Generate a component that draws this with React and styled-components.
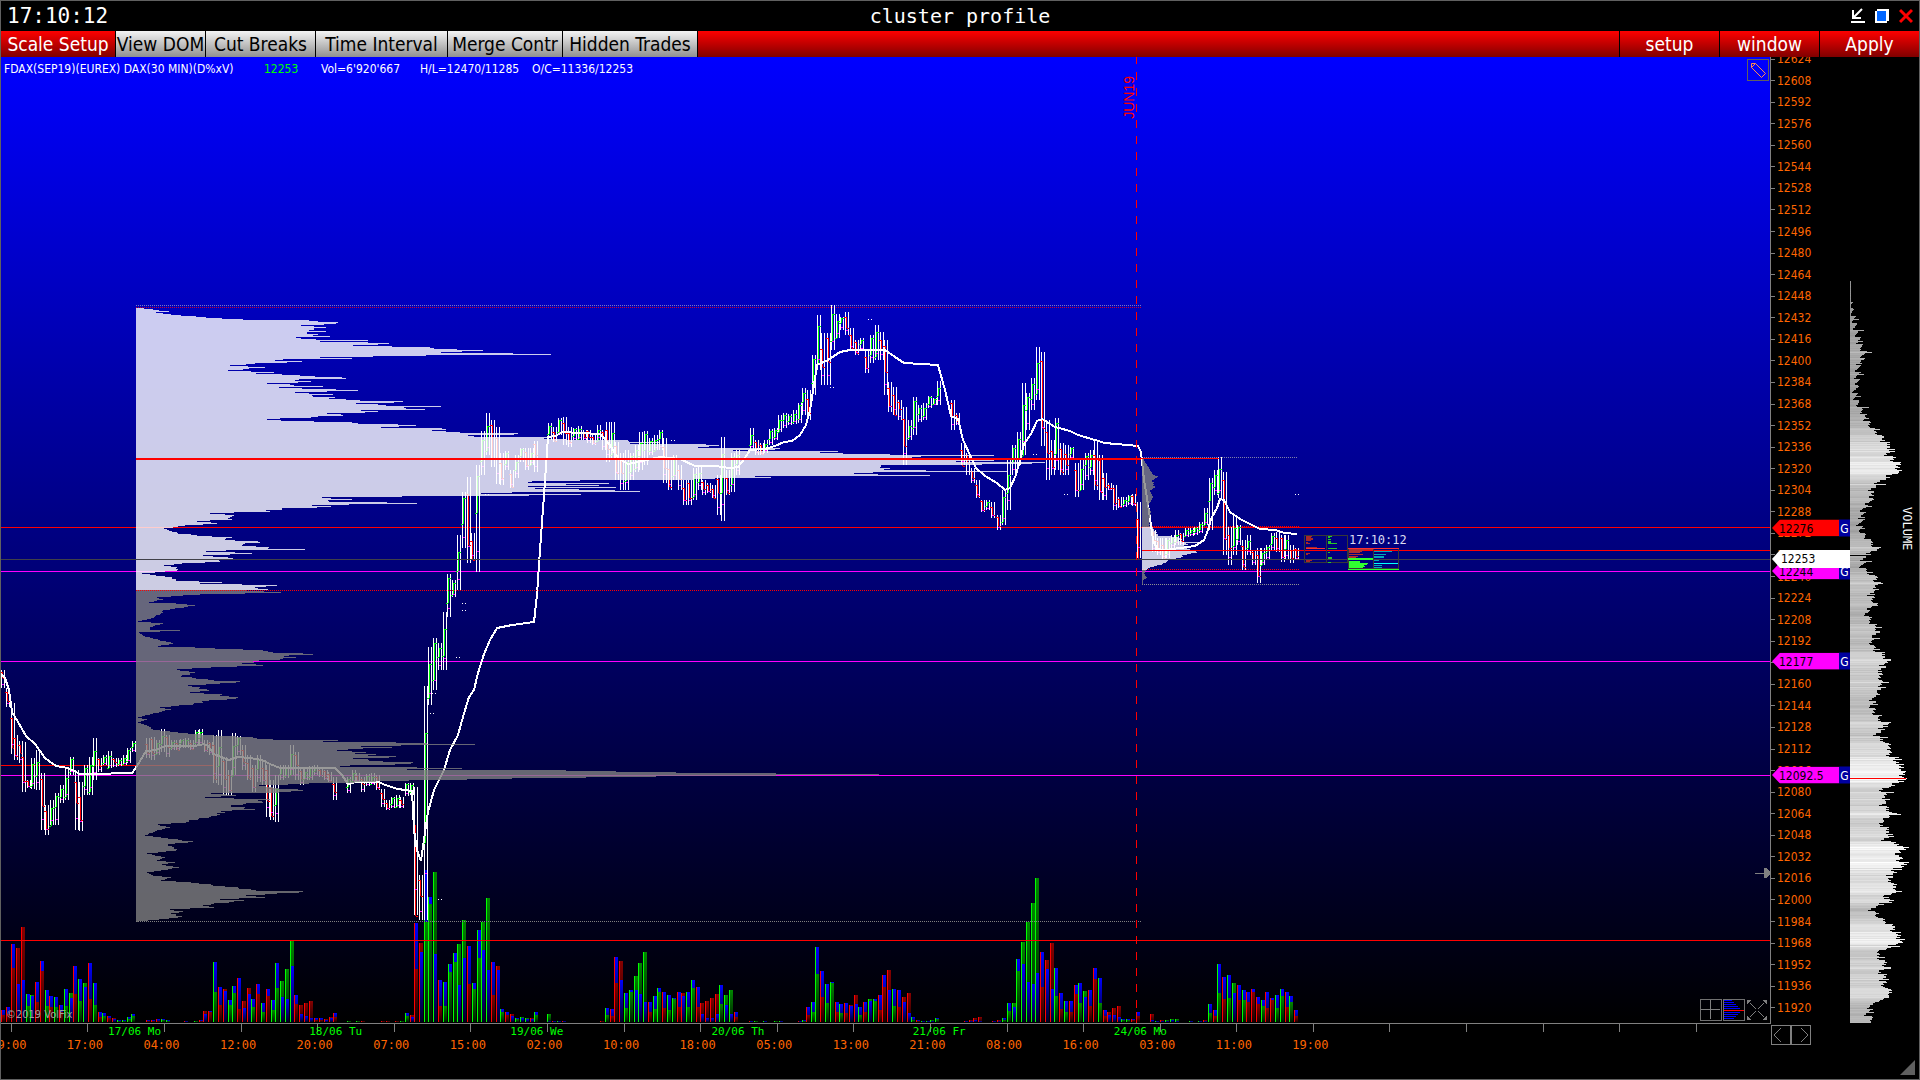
import React from 'react'
import styled, { createGlobalStyle, css } from 'styled-components';

const tools = [
  { label: 'Scale Setup', width: 114, active: true },
  { label: 'View DOM', width: 89 },
  { label: 'Cut Breaks', width: 109 },
  { label: 'Time Interval', width: 131 },
  { label: 'Merge Contr', width: 114 },
  { label: 'Hidden Trades', width: 134 },
];

const times = ['09:00', '17:00', '04:00', '12:00', '20:00', '07:00', '15:00', '02:00', '10:00', '18:00', '05:00',
  '13:00', '21:00', '08:00', '16:00', '03:00', '11:00', '19:00', '', '', '', '', ''];

const dates = ['17/06 Mo', '18/06 Tu', '19/06 We', '20/06 Th', '21/06 Fr', '24/06 Mo'];

const prices = Array.from({ length: 45 }, (_, i) => 12624 - i * 16);

const tags = [
  { price: 12276, color: '#ff0000' },
  { price: 12244, color: '#ff00ff' },
  { price: 12177, color: '#ff00ff' },
  { price: 12092.5, color: '#ff00ff' },
];

// the plot spans y 57..1023 in drawing units
const TOP = 57;
const HEIGHT = 966;
const priceToY = price => 59.3 + (12624 - price) * 1.3466;
const priceToPercent = price => `${(priceToY(price) - TOP) / HEIGHT * 100}%`;

// profiles: y, width
const lightProfile = [
  307,0, 311,33, 312,20, 314,35, 316,60, 317,70, 319,107, 320,173, 323,200, 325,165, 327,190, 329,178, 331,190, 332,171,
  334,182, 336,194, 337,160, 339,180, 340,232, 341,184, 343,253, 345,217, 347,294, 349,321, 350,347, 352,305, 353,377,
  354,415, 355,290, 357,184, 358,216, 359,147, 360,139, 361,166, 363,119, 365,94, 367,129, 370,92, 372,138, 373,120,
  375,164, 378,210, 379,163, 381,175, 383,131, 386,187, 387,143, 389,200, 390,222, 392,159, 394,197, 396,177, 399,210,
  401,267, 403,220, 405,250, 406,305, 407,268, 409,289, 410,225, 411,242, 413,191, 415,207, 416,182, 419,131, 421,178,
  425,280, 427,245, 428,306, 430,296, 432,324, 433,382, 436,338, 437,411, 439,430, 440,492, 443,494, 444,570, 445,583,
  447,562, 448,644, 450,597, 451,702, 452,684, 453,707, 454,754, 455,858, 456,785, 457,776, 459,780, 460,858, 461,820,
  463,896, 464,846, 465,745, 467,744, 468,754, 469,748, 470,790, 471,872, 472,737, 473,718, 474,742, 475,794, 476,619,
  478,579, 479,557, 480,444, 481,396, 482,392, 483,473, 484,430, 485,463, 486,392, 487,480, 488,399, 489,443, 490,479,
  491,504, 492,376, 493,345, 494,445, 495,393, 496,266, 497,186, 499,216, 501,193, 503,281, 504,213, 505,176, 506,195,
  508,146, 511,134, 512,98, 513,74, 515,98, 517,94, 519,96, 521,61, 523,81, 525,49, 528,28, 530,33, 533,42, 536,76,
  537,96, 539,89, 541,122, 544,107, 548,132, 549,169, 550,90, 551,70, 553,116, 555,67, 558,97, 561,84, 563,46, 565,28,
  567,41, 570,41, 573,6, 577,36, 580,40, 582,86, 583,64, 585,141, 587,119, 589,132,
];
const grayProfile = [
  590,110, 592,145, 593,109, 594,64, 597,21, 599,27, 602,13, 603,40, 605,59, 608,39, 610,27, 613,25, 618,15, 621,2,
  623,27, 627,14, 629,14, 630,44, 632,3, 636,9, 639,22, 643,37, 646,22, 647,59, 650,127, 652,137, 653,167, 654,177,
  656,148, 657,160, 659,144, 661,117, 663,106, 665,127, 667,75, 669,41, 672,59, 676,45, 680,78, 681,104, 683,84, 685,52,
  690,73, 692,54, 694,86, 698,100, 701,66, 704,57, 707,24, 709,35, 713,17, 717,2, 719,11, 722,2, 725,11, 729,17,
  732,42, 734,66, 736,100, 738,121, 739,137, 740,202, 741,187, 742,260, 744,339, 746,225, 747,256, 749,212, 753,219,
  756,260, 758,217, 760,233, 763,275, 766,204, 768,326, 769,271, 770,430, 771,480, 772,540, 773,640, 774,743, 775,640,
  776,520, 777,450, 778,376, 779,331, 780,273, 783,173, 785,123, 787,137, 790,167, 792,143, 793,75, 795,100, 797,69,
  799,134, 801,126, 804,107, 806,95, 809,119, 811,85, 815,81, 818,63, 822,50, 824,22, 827,34, 830,21, 835,9, 837,25,
  841,57, 844,32, 847,38, 850,40, 853,11, 857,29, 860,21, 862,39, 864,26, 867,43, 870,25, 872,11, 875,17, 877,35,
  880,25, 882,55, 884,75, 888,103, 890,120, 891,167, 893,141, 895,110, 897,129, 899,84, 900,108, 903,78, 905,67,
  907,78, 909,34, 911,47, 913,35, 916,46, 918,33, 921,2,
];
const sessionGrayTop = [458,2, 462,3, 466,6, 470,8, 474,11, 476,16, 480,10, 487,13, 490,8, 497,11, 505,6, 512,9, 520,7, 526,8];
const sessionLight = [527,11, 531,13, 535,16, 536,30, 538,38, 541,40, 542,59, 543,44, 547,45, 550,48, 551,54, 552,55,
  554,45, 557,39, 560,26, 562,24, 564,20, 567,8, 569,5];
const sessionGrayBottom = [570,4, 573,2, 577,5, 580,1, 584,1];

const volumeProfile = [
  281,1, 299,1, 310,2, 320,5, 330,7, 338,9, 347,12, 352,16, 358,13, 366,9, 380,8, 392,6, 400,7, 410,13, 420,17, 429,24,
  437,34, 440,33, 447,43, 453,38, 458,43, 463,48, 470,50, 477,38, 482,30, 490,22, 500,22, 508,14, 520,12, 528,10,
  537,17, 548,28, 553,20, 556,16, 567,13, 573,20, 577,28, 588,27, 595,21, 603,26, 613,16, 622,23, 630,29, 640,22,
  648,25, 657,38, 663,37, 670,30, 685,33, 697,25, 707,23, 717,28, 723,38, 735,27, 744,40, 753,40, 763,50, 772,54,
  778,55, 785,43, 788,33, 797,38, 805,33, 813,45, 823,30, 832,42, 840,35, 846,56, 855,47, 859,52, 866,56, 870,40,
  872,48, 878,38, 887,48, 892,46, 898,33, 900,45, 905,27, 910,22, 915,27, 922,38, 927,45, 935,47, 939,53, 943,50,
  947,40, 953,27, 960,33, 967,39, 970,30, 977,37, 983,33, 993,42, 1000,33, 1002,23, 1007,22, 1013,18, 1018,22, 1022,25,
];

// candles: x, high, low
const candles = [
  1,670,688, 6,688,707, 11,703,754, 14,735,760, 19,741,763, 22,742,792, 27,780,788, 31,758,789, 36,750,790, 41,773,830,
  45,805,835, 50,800,825, 55,793,825, 60,785,803, 65,768,800, 70,757,775, 75,770,830, 79,782,831, 84,765,795,
  89,757,795, 93,738,780, 98,758,772, 103,755,765, 108,751,768, 113,758,767, 118,758,766, 123,755,765, 127,748,763,
  132,741,752, 146,738,758, 151,737,760, 156,740,755, 161,729,752, 166,735,757, 171,740,750, 176,740,750, 180,739,748,
  185,738,748, 190,740,750, 195,730,745, 199,729,745, 204,740,752, 209,742,755, 213,735,783, 218,730,785, 223,757,795,
  228,770,795, 232,733,775, 237,736,755, 242,745,770, 247,755,780, 252,765,792, 257,755,782, 262,760,785, 266,765,817,
  270,780,820, 275,775,822, 280,765,780, 285,765,778, 290,745,775, 295,752,780, 300,768,785, 304,768,780, 309,766,780,
  314,765,775, 319,767,777, 324,770,780, 328,772,782, 333,777,800, 347,777,793, 352,770,783, 356,773,782, 361,777,792,
  366,774,786, 371,773,785, 376,775,790, 381,789,807, 386,800,810, 391,797,808, 396,795,808, 400,797,808, 405,783,796,
  410,783,795, 414,787,915, 419,875,920, 424,686,920, 428,647,705, 433,638,690, 438,643,670, 443,612,670, 447,574,617,
  452,580,597, 457,535,590, 462,492,548, 467,477,563, 471,533,560, 476,465,572, 481,431,475, 486,413,455, 491,420,467,
  496,427,484, 500,453,485, 505,451,470, 510,470,488, 515,455,478, 520,448,462, 525,448,470, 530,448,465, 534,441,472,
  548,423,440, 553,427,442, 558,418,435, 563,417,445, 568,427,447, 573,428,440, 578,426,440, 583,430,440, 587,430,443,
  592,435,445, 597,425,440, 602,430,450, 606,422,462, 611,422,460, 615,442,480, 620,453,490, 625,450,490, 630,453,480,
  635,445,472, 639,432,470, 644,431,465, 649,438,455, 654,435,450, 659,430,450, 663,438,483, 668,460,490, 673,455,480,
  678,465,490, 683,480,505, 688,480,505, 693,468,500, 698,465,490, 702,480,495, 707,483,493, 712,485,498, 717,475,515,
  721,437,521, 726,470,495, 731,453,492, 736,450,475, 750,428,450, 755,440,455, 760,443,455, 764,440,453, 769,429,445,
  774,428,440, 778,415,432, 783,413,428, 788,414,425, 793,410,424, 798,403,423, 802,388,415, 807,390,420, 812,355,395,
  817,315,370, 821,333,385, 827,333,385, 831,305,350, 836,314,338, 840,317,330, 845,312,335, 850,328,350, 855,340,355,
  860,338,350, 865,350,373, 870,335,363, 875,325,360, 880,332,360, 884,340,395, 888,382,412, 893,387,415, 898,400,420,
  903,407,465, 908,420,440, 913,397,435, 918,405,422, 923,403,420, 928,396,408, 933,398,405, 937,381,405, 951,400,430,
  956,413,425, 961,443,465, 966,453,475, 971,468,483, 976,480,498, 981,500,512, 986,500,510, 991,502,518, 997,515,530,
  1002,490,525, 1007,460,510, 1012,445,475, 1017,432,465, 1022,383,455, 1026,393,430, 1031,378,410, 1036,347,400,
  1041,352,446, 1046,420,480, 1051,440,475, 1055,418,470, 1060,443,475, 1065,445,475, 1070,447,460, 1075,463,497,
  1080,460,490, 1085,453,480, 1090,450,475, 1094,440,490, 1099,455,500, 1103,473,500, 1108,483,490, 1113,485,510,
  1118,497,508, 1123,497,507, 1128,495,505, 1132,494,506, 1137,502,558, 1152,530,552, 1157,538,555, 1162,538,560,
  1166,538,558, 1171,535,548, 1175,530,545, 1180,533,545, 1185,528,537, 1190,528,536, 1194,527,535, 1199,522,533,
  1204,508,525, 1209,478,530, 1214,470,495, 1218,457,498, 1223,472,555, 1228,527,565, 1233,516,555, 1237,525,545,
  1242,540,570, 1247,535,555, 1252,550,565, 1257,548,583, 1261,548,565, 1266,545,560, 1271,533,550, 1276,532,552,
  1281,535,562, 1285,535,560, 1290,545,563, 1295,548,560,
];

const average = [
  1,674, 5,678, 9,690, 12,712, 18,722, 26,736, 35,744, 45,758, 56,766, 68,768, 80,774, 90,774, 132,773, 137,766, 146,751,
  156,750, 165,746, 195,746, 204,744, 208,746, 214,754, 221,757, 229,760, 238,757, 250,758, 262,760, 270,764, 280,768,
  335,768, 342,775, 348,784, 356,782, 378,782, 388,786, 398,789, 412,791, 414,830, 417,850, 421,861, 424,840, 428,812,
  434,790, 444,770, 450,750, 458,735, 463,717, 469,697, 474,690, 478,673, 484,654, 490,640, 497,628, 512,625, 534,622,
  537,595, 540,550, 544,495, 548,437, 555,436, 563,432, 600,434, 610,445, 618,458, 628,464, 642,461, 660,457, 680,459,
  695,466, 715,466, 730,468, 738,467, 745,458, 750,450, 765,449, 775,446, 784,442, 792,441, 800,435, 806,425, 810,410,
  814,385, 817,365, 828,360, 840,352, 850,350, 885,350, 895,357, 904,363, 922,364, 938,365, 945,390, 951,416, 958,419,
  963,440, 970,455, 976,468, 985,476, 997,483, 1005,490, 1010,488, 1016,475, 1020,460, 1024,444, 1031,434, 1037,421,
  1042,419, 1055,427, 1070,431, 1078,435, 1095,440, 1105,443, 1138,446, 1141,452, 1144,480, 1147,498, 1150,518,
  1153,540, 1157,549, 1165,550, 1180,548, 1195,546, 1204,540, 1208,530, 1211,519, 1217,508, 1220,499, 1224,500,
  1230,512, 1240,519, 1252,525, 1260,529, 1275,530, 1285,533, 1297,534,
];

// volume bars: x, side, traded height, blue height
const bars = `1r7:12 6r8:15 11r54:78 16r74:38 21r95:42 26g16:28 30g27:26 35r20:40 40r51:61 45g16:32 49r15:26 54g15:25 59r10:17
64g16:33 69g29:24 73r28:56 78g21:43 83g39:35 88r23:59 93g17:39 98r5:10 102g6:9 107r4:6 112r4:3 117g1:2 122g1:2 127g3:5
131g6:8 146r1:2 151r1:2 156r1:3 161g2:3 166g1:2 184r0:1 194g1:0 199r1:2 203r11:8 208r10:11 213g30:60 218r17:35 223r33:31
228g17:22 232g29:36 237r13:44 242r21:14 247r34:28 251g15:23 256r28:38 261g10:19 266r26:33 271g12:22 275g34:59 280g41:25
285g53:23 290g81:56 294r18:27 299r17:8 304r19:6 309r21:4 314r2:4 319r2:4 324r3:2 329r5:4 333r5:9 347g1:0 356g1:0 361r1:0
381r1:0 386r1:0 395r1:0 400g1:0 405g6:9 410r7:5 414r53:99 419r79:70 424g100:152 428g118:125 433g150:68 438r16:42
443g16:40 448g50:58 453g60:69 457g78:37 462g102:64 467r38:76 472g33:39 477g64:92 481g100:72 486g124:52 491r27:60
496r56:52 500g10:13 505r7:10 510r8:6 515g3:4 520g5:4 525g4:3 530r4:3 534g7:10 547g8:1 552r0:1 557g0:1 562r0:1 600r1:0
605g7:14 610r6:13 614r39:65 619r61:42 624g14:29 629g30:32 634g46:32 638g59:28 643g70:20 648r10:20 653g13:26 657g30:34
662r14:30 667g12:27 672g23:24 677r15:30 681r29:26 686g15:30 691g34:42 696r15:35 700r19:8 705r21:4 710r24:4 715r28:8
719g18:37 724g27:17 729g32:8 734r5:10 749r0:1 754g1:0 763g0:1 774g1:0 779g0:1 798r0:1 802g1:2 806r7:15 811g10:20
815g48:75 820r25:51 825g19:38 830g39:40 835r10:20 839g9:18 844r9:19 849r17:16 854r27:18 858g7:15 863r10:20 868g23:21
873g21:23 878r12:27 882r35:47 887r52:32 892g16:33 897r15:32 902r25:20 907r29:9 911g2:5 916r1:2 921g0:1 926g0:1 930g2:1
935g3:4 964r0:1 969r2:1 973r4:2 978r5:1 992r0:1 997r2:1 1002g2:4 1007g11:19 1012g19:15 1016g51:63 1021g80:58 1026g100:40
1031g119:38 1035g144:49 1040r35:70 1045r62:53 1050r79:33 1054g26:54 1059r13:29 1064g10:21 1069r10:21 1074r28:37
1078g19:39 1083g31:25 1088r16:32 1093r43:54 1098g19:44 1103r6:12 1107r10:7 1112r14:7 1117r16:5 1121g2:3 1126g2:3
1131r2:3 1136r6:10 1150r8:2 1155g0:1 1160r2:1 1165g2:1 1170g3:2 1175g3:1 1189g0:1 1198g0:1 1203r2:1 1208g9:18 1213r6:12
1217g29:58 1222r23:45 1227g24:47 1232g39:29 1237r22:37 1242g22:32 1246r20:30 1251r30:33 1256r18:25 1261g16:22 1265r14:30
1270r22:24 1275g14:27 1280g26:33 1285r15:30 1289g20:26 1294r6:12`.split(/\s+/).map(item => {
  const [, x, side, traded, blue] = item.match(/(\d+)([rg])(\d+):(\d+)/);
  return { x: +x, side, traded: +traded, blue: +blue };
});

const triples = list => list.reduce((acc, v, i) => {
  if (i % 3 === 0) acc.push([]);
  acc[acc.length - 1].push(v);
  return acc;
}, []);

// one [y, width] entry per pixel row between the listed points
const toRows = points => {
  const rows = [];
  for (let i = 0; i < points.length - 2; i += 2) {
    const [y1, w1, y2, w2] = points.slice(i, i + 4);
    for (let y = y1; y < y2; y++) {
      const jitter = y === y1 ? 1 : 1 + ((y * 7) % 5 - 2) * 0.03;
      rows.push([y, Math.round((w1 + (w2 - w1) * (y - y1) / (y2 - y1)) * jitter)]);
    }
  }
  rows.push(points.slice(-2));
  return rows;
};

const rowsPath = (left, points) => toRows(points).map(([y, w]) => `M${left} ${y}h${w}v1h${-w}z`).join('');

const averagePath = 'M' + average.reduce((acc, v, i) => acc + (i % 2 ? `,${v}` : ` ${v}`), '');

function Line({ y, from = 1, to = 1770, color, size = 1, dotted }) {
  return (
    <line x1={from} x2={to} y1={y + size / 2} y2={y + size / 2} stroke={color} strokeWidth={size}
      strokeDasharray={dotted ? '1 1' : undefined} />
  )
}

function Candle({ x, high, low, up, index }) {
  const size = low - high;
  const start = high + Math.round(size * (0.1 + (index % 3) * 0.1));
  const body = Math.max(2, Math.round(size * (0.35 + (index % 4) * 0.12)));
  const color = up ? '#00ff00' : '#ff0000';
  return (
    <>
      <rect x={x} y={high} width="1" height={size} fill="#fff" />
      <rect x={x + 3} y={high} width="1" height={size} fill="#fff" />
      <rect x={x + 1} y={start} width="1" height={body} fill={color} />
      <rect x={x - 1} y={up ? start + body : start} width="2" height="1" fill={color} />
      <rect x={x + 2} y={up ? start : start + body} width="2" height="1" fill={color} />
      <rect x={x + 1} y={high + Math.round(size * 0.8)} width="2" height="1" fill="#ff00ff" />
    </>
  )
}

function VolumeBar({ x, side, traded, blue }) {
  const base = 1022;
  const top = Math.max(traded, blue, 1);
  const parts = [{ h: traded, fill: `url(#${side})` }, { h: blue, fill: 'url(#b)' }].sort((a, b) => b.h - a.h);
  return (
    <>
      {parts.map(part => <rect key={part.fill} x={x + 1} y={base - part.h} width="3" height={part.h} fill={part.fill} />)}
      <rect x={x} y={base - top} width="1" height={top} fill={side === 'g' ? '#00ff00' : '#ff0000'} />
    </>
  )
}

function Fade({ id, from, to }) {
  return (
    <linearGradient id={id} x1="0" y1="0" x2="0" y2="1">
      <stop offset="0" stopColor={from} />
      <stop offset="1" stopColor={to} />
    </linearGradient>
  )
}

const domRed = [[1306,536,6], [1306,537,5], [1306,538,7], [1306,539,7], [1306,540,5], [1306,542,2], [1306,543,4],
  [1306,547,11], [1306,553,4], [1306,554,2], [1306,560,6], [1306,561,4]];
const domGreen = [[1328,536,4], [1328,537,2], [1328,539,3], [1328,541,3], [1328,542,3], [1328,543,9], [1328,548,9],
  [1328,552,2], [1328,557,4], [1328,558,4], [1328,562,3]];
const ladderRed = [[1349,549,24], [1349,550,15], [1349,551,13], [1349,552,11], [1349,554,14], [1349,556,9], [1349,557,7]];
const ladderGreen = [[1348,558,25], [1348,559,25], [1349,561,11], [1349,562,11], [1349,563,19], [1349,564,18],
  [1349,565,15], [1349,566,16], [1349,567,14]];
const ladderCyan = [[1374,551,18], [1374,554,12], [1374,556,10], [1374,557,10], [1374,560,5], [1374,565,8], [1374,567,8]];

function Marks({ items, color }) {
  return items.map(([x, y, w]) => <rect key={`${x}-${y}`} x={x} y={y} width={w} height="1" fill={color} />)
}

function Plot() {
  const list = triples(candles);
  return (
    <Drawing viewBox="1 57 1769 966" preserveAspectRatio="none" shapeRendering="crispEdges">
      <defs>
        <Fade id="g" from="#008800" to="#001a00" />
        <Fade id="r" from="#880000" to="#1a0000" />
        <Fade id="b" from="#0000ff" to="#000022" />
      </defs>

      <Line y={305} from={136} to={1141} color="#7878c0" dotted />
      <Line y={307} from={136} to={1141} color="#c80030" dotted />
      <Line y={457} from={1142} to={1298} color="#8080a8" dotted />
      <Line y={526} from={1142} to={1299} color="#ff0000" dotted />
      <Line y={569} from={1142} to={1299} color="#ff0000" dotted />
      <Line y={584} from={1142} to={1299} color="#909090" dotted />
      <Line y={527} color="#ff0000" />
      <Line y={571} color="#ff00ff" />
      <Line y={661} color="#ff00ff" />
      <Line y={765} to={213} color="#ff0000" />
      <Line y={775} color="#ff00ff" />

      {bars.map(bar => <VolumeBar key={bar.x} {...bar} />)}
      {list.map(([x, high, low], i) => {
        const prev = list[i - 1] || [0, 660, 680];
        return <Candle key={x} x={x} high={high} low={low} index={i} up={high + low < prev[1] + prev[2]} />
      })}
      {[[462,603], [462,610], [456,657], [432,693], [430,713], [438,899], [830,387], [868,319], [1022,454],
        [1033,454], [1064,494], [1295,494], [485,494], [671,440]].map(([x, y]) =>
        <path key={`${x}-${y}`} d={`M${x} ${y}h1v1h-1zM${x + 3} ${y}h1v1h-1z`} fill="#fff" />
      )}
      <path d={averagePath} fill="none" stroke="#fff" strokeWidth="2" />

      <path d={rowsPath(136, lightProfile)} fill="#fff" fillOpacity="0.8" />
      <path d={rowsPath(136, grayProfile)} fill="#808080" fillOpacity="0.8" />
      <path d={rowsPath(1142, sessionGrayTop)} fill="#808080" fillOpacity="0.8" />
      <path d={rowsPath(1142, sessionLight)} fill="#fff" fillOpacity="0.8" />
      <path d={rowsPath(1142, sessionGrayBottom)} fill="#808080" fillOpacity="0.8" />

      <Line y={458} from={136} to={1141} color="#ff0000" size={2} />
      <Line y={458} from={1060} to={1219} color="#ff0000" />
      <Line y={550} from={1142} color="#ff0000" />
      <Line y={559} color="#404048" />
      <Line y={590} from={136} to={1141} color="#ff0000" dotted />
      <Line y={921} from={136} to={1141} color="#808080" dotted />
      <Line y={940} color="#ff0000" />
      <line x1="1136.5" x2="1136.5" y1="56" y2="1023" stroke="#ff0000" strokeDasharray="8 8" />

      <path d="M1304.5 535.5h22v27h-22zM1326.5 535.5h21v27h-21zM1348.5 548.5h25v20h-25zM1373.5 548.5h25v20h-25z"
        fill="none" stroke="#383838" />
      <Marks items={domRed} color="#a82828" />
      <Marks items={domGreen} color="#28c828" />
      <Marks items={ladderRed} color="#b03030" />
      <Marks items={ladderGreen} color="#30ff30" />
      <Marks items={ladderCyan} color="#00a8b8" />
      <Line y={548} from={1306} to={1325} color="#ff3030" />
      <Line y={548} from={1348} to={1399} color="#ff3030" />
      <Line y={563} from={1374} to={1398} color="#00ffff" />
      <Line y={569} from={1348} to={1399} color="#30ff30" />

      <path d="M1755 873.5h10" stroke="#808080" />
      <path d="M1764 868v10h2l4-4v-2l-4-4z" fill="#808080" />
    </Drawing>
  )
}

function Volume() {
  return (
    <Drawing viewBox="1850 57 69 966" preserveAspectRatio="none" shapeRendering="crispEdges">
      {toRows(volumeProfile).map(([y, w]) => {
        const width = y < 300 ? w : Math.max(1, w + (y * 13) % 7 - 4 + (y % 11 === 0 ? 5 : 0));
        const tone = Math.min(255, 142 + Math.round(width * 1.8) + (y * 5) % 9);
        return <rect key={y} x="1850" y={y} width={width} height="1" fill={`rgb(${tone},${tone},${tone})`} />
      })}
      <rect x="1850" y="555" width="20" height="1" fill="#000" />
      <rect x="1850" y="778" width="56" height="1" fill="#ff0000" />
    </Drawing>
  )
}

export default function App() {
  return (
    <Window>
      <GlobalStyle />
      <Header>
        <Clock>17:10:12</Clock>
        <Title>cluster profile</Title>
        <WindowButtons>
          <IconButton aria-label="minimize">
            <svg width="14" height="16" viewBox="0 0 14 16">
              <path d="M11 1L3 9M2 2v8h8" fill="none" stroke="#fff" strokeWidth="2" />
              <path d="M0 13h14v2H0z" fill="#fff" />
            </svg>
          </IconButton>
          <IconButton aria-label="restore">
            <svg width="14" height="16" viewBox="0 0 14 16">
              <path d="M2 1h12v12h-2v2H0V3h2z" fill="#fff" />
              <path d="M2 3h9v10H2z" fill="#0066ff" />
            </svg>
          </IconButton>
          <IconButton aria-label="close">
            <svg width="14" height="16" viewBox="0 0 14 16">
              <path d="M1 2l12 12M13 2L1 14" stroke="#ff0000" strokeWidth="3" />
            </svg>
          </IconButton>
        </WindowButtons>
      </Header>

      <Toolbar>
        {tools.map(tool =>
          <ToolButton key={tool.label} $width={tool.width} $active={tool.active}>{tool.label}</ToolButton>
        )}
        <MenuButtons>
          <MenuButton>setup</MenuButton>
          <MenuButton>window</MenuButton>
          <MenuButton>Apply</MenuButton>
        </MenuButtons>
      </Toolbar>

      <Workspace>
        <Chart>
          <Plot />
          <Info>
            <span>FDAX(SEP19)(EUREX) DAX(30 MIN)(D%xV)</span>
            <Last>12253</Last>
            <span>Vol=6'920'667</span>
            <span>H/L=12470/11285</span>
            <span>O/C=11336/12253</span>
          </Info>
          <Contract>JUN19</Contract>
          <LadderClock>17:10:12</LadderClock>
          <Watermark>©2019 VolFix</Watermark>
          <EditButton aria-label="draw">
            <svg width="20" height="20" viewBox="0 0 20 20" fill="none" stroke="#ff8c50">
              <path d="M3.500 3.500h4l10 10-4 4-10-10zM3.500 7.500l4-4" />
            </svg>
          </EditButton>
          <ChartTools>
            <ToolIcon aria-label="crosshair">
              <svg width="20" height="20" viewBox="0 0 20 20" stroke="#808080">
                <path d="M9.500 0v19M0 9.500h19" />
              </svg>
            </ToolIcon>
            <ToolIcon aria-label="profile">
              <svg width="20" height="20" viewBox="0 0 20 20" shapeRendering="crispEdges">
                <path d="M0 0.500h8M0 2.500h10M0 4.500h12M0 6.500h14M0 8.500h16M0 12.500h16M0 14.500h14M0 16.500h12M0 18.500h10" stroke="#0000ff" />
                <path d="M0 10.500h20" stroke="#ff0000" />
              </svg>
            </ToolIcon>
            <ToolIcon aria-label="expand" $plain>
              <svg width="20" height="20" viewBox="0 0 20 20" stroke="#808080" fill="#808080">
                <path d="M3 3l6 6M17 3l-6 6M3 17l6-6M17 17l-6-6" />
                <path d="M0 0h4L0 4zM20 0h-4l4 4zM0 20h4l-4-4zM20 20h-4l4-4z" />
              </svg>
            </ToolIcon>
          </ChartTools>
        </Chart>

        <PriceAxis>
          <Prices>
            {prices.map(price => <Price key={price}>{price}</Price>)}
          </Prices>
          {tags.map(tag =>
            <Tag key={tag.price} style={{ top: priceToPercent(tag.price) }}>
              <TagValue $color={tag.color}>{tag.price}</TagValue>
              <TagMark>G</TagMark>
            </Tag>
          )}
          <Tag $current style={{ top: priceToPercent(12253) }}>
            <TagValue $color="#fff" $current>12253</TagValue>
          </Tag>
        </PriceAxis>

        <VolumePanel>
          <Volume />
          <VolumeLabel>VOLUME</VolumeLabel>
        </VolumePanel>

        <TimeAxis>
          <Times>
            {times.map((time, i) => <Time key={i}><span>{time}</span></Time>)}
          </Times>
          <Dates>
            {dates.map(date => <DateLabel key={date}>{date}</DateLabel>)}
          </Dates>
        </TimeAxis>

        <Scroll>
          <ScrollButton aria-label="back">
            <svg width="18" height="18" viewBox="0 0 18 18" fill="none" stroke="#808080">
              <path d="M9 2L2 9l7 7" />
            </svg>
          </ScrollButton>
          <ScrollButton aria-label="forward">
            <svg width="18" height="18" viewBox="0 0 18 18" fill="none" stroke="#808080">
              <path d="M9 2l7 7-7 7" />
            </svg>
          </ScrollButton>
        </Scroll>

        <Corner>
          <svg width="15" height="15" viewBox="0 0 15 15">
            <path d="M15 0v15H0z" fill="#606060" />
          </svg>
        </Corner>
      </Workspace>
    </Window>
  )
}

const GlobalStyle = createGlobalStyle`
  body {
    margin: 0;
    background-color: #000;
  }
  * {
    box-sizing: border-box;
  }
  button {
    margin: 0;
    padding: 0;
    border: none;
    background: none;
  }
`;

const Window = styled.div`
  display: flex;
  flex-direction: column;
  min-height: 100vh;
  border: 1px solid #606060;
  background-color: #000;
  color: #fff;
  font-family: 'DejaVu Sans Condensed', 'DejaVu Sans', sans-serif;
  font-size: 12px;
`;

const Header = styled.header`
  display: grid;
  grid-template-columns: 1fr auto 1fr;
  align-items: center;
  height: 30px;
  padding: 0 6px;
  font-family: 'DejaVu Sans Mono', monospace;
`;

const Clock = styled.div`
  font-size: 21px;
  line-height: 28px;
`;

const Title = styled.h1`
  margin: 0;
  font-size: 20px;
  font-weight: normal;
  line-height: 28px;
`;

const WindowButtons = styled.div`
  display: flex;
  justify-content: flex-end;
  gap: 10px;
`;

const IconButton = styled.button`
  display: flex;
`;

const redBar = css`
  background-image: linear-gradient(#ff0000, #800000);
`;

const Toolbar = styled.nav`
  display: flex;
  height: 26px;
  ${redBar}
`;

const ToolButton = styled.button`
  flex: none;
  box-sizing: content-box;
  width: ${props => props.$width}px;
  border-right: 1px solid #000;
  white-space: nowrap;
  font-family: 'DejaVu Sans Condensed', 'DejaVu Sans', sans-serif;
  font-size: 19px;
  line-height: 26px;
  color: ${props => props.$active ? '#fff' : '#000'};
  background-image: ${props => props.$active ? 'linear-gradient(#ff0000, #800000)' : 'linear-gradient(#f4f4f4, #909090)'};
`;

const MenuButtons = styled.div`
  display: flex;
  margin-left: auto;
`;

const MenuButton = styled.button`
  width: 100px;
  border-left: 1px solid #000;
  font-family: 'DejaVu Sans Condensed', 'DejaVu Sans', sans-serif;
  font-size: 19px;
  line-height: 26px;
  color: #fff;
`;

const Workspace = styled.main`
  flex: 1;
  display: grid;
  grid-template-columns: minmax(0, 1fr) 79px 69px;
  grid-template-rows: minmax(0, 1fr) 55px;
`;

const Drawing = styled.svg`
  display: block;
  grid-area: 1 / 1;
  width: 100%;
  height: 100%;
  min-height: 0;
`;

const Chart = styled.section`
  position: relative;
  display: grid;
  grid-template-rows: minmax(0, 1fr);
  border-right: 1px solid #808080;
  border-bottom: 1px solid #808080;
  background-image: linear-gradient(#0000ff, #000);
`;

const Info = styled.div`
  grid-area: 1 / 1;
  align-self: start;
  display: grid;
  grid-template-columns: 260px 57px 99px 112px auto;
  padding: 4px 3px;
  line-height: 16px;
  white-space: pre;
`;

const Last = styled.span`
  color: #00ff00;
`;

const Contract = styled.div`
  position: absolute;
  top: 19px;
  left: 63.3%;
  writing-mode: vertical-rl;
  transform: rotate(180deg);
  font-family: 'Liberation Sans', Arial, sans-serif;
  font-size: 14px;
  line-height: 16px;
  color: #ff0000;
`;

const LadderClock = styled.div`
  position: absolute;
  top: 49.2%;
  left: 76.2%;
  font-family: 'DejaVu Sans Mono', monospace;
  line-height: 16px;
  color: #dcdcf0;
`;

const Watermark = styled.div`
  position: absolute;
  bottom: 0;
  left: 5px;
  font-size: 11px;
  line-height: 16px;
  color: #a0a0a0;
`;

const EditButton = styled.button`
  position: absolute;
  top: 2px;
  right: 1px;
  display: flex;
  border: 1px solid #606060;
`;

const ChartTools = styled.div`
  position: absolute;
  right: 2px;
  bottom: 2px;
  display: flex;
  gap: 1px;
`;

const ToolIcon = styled.button`
  display: flex;
  border: 1px solid ${props => props.$plain ? 'transparent' : '#707070'};
`;

const PriceAxis = styled.div`
  position: relative;
  display: flex;
  flex-direction: column;
  margin-bottom: 1px;
  overflow: hidden;
`;

const Prices = styled.div`
  flex: 1;
  display: flex;
  flex-direction: column;
  justify-content: space-between;
  margin: -8px 0 5px;
`;

const Price = styled.div`
  display: flex;
  align-items: center;
  gap: 2px;
  height: 20px;
  line-height: 20px;
  color: #ff6600;
  &:before {
    content: '';
    width: 4px;
    height: 1px;
    background-color: #808080;
  }
`;

const Tag = styled.div`
  position: absolute;
  left: 1px;
  right: 0;
  display: flex;
  height: ${props => props.$current ? 18 : 17}px;
  line-height: 18px;
  transform: translateY(-50%);
`;

const TagValue = styled.div`
  flex: 1;
  padding-left: ${props => props.$current ? 9 : 7}px;
  color: #000;
  background-color: ${props => props.$color};
  clip-path: polygon(0 50%, 8px 0, 100% 0, 100% 100%, 8px 100%);
`;

const TagMark = styled.div`
  width: 11px;
  text-align: center;
  background-color: #0000a0;
`;

const VolumePanel = styled.div`
  position: relative;
  display: grid;
  grid-template-rows: minmax(0, 1fr);
  margin-bottom: 1px;
`;

const VolumeLabel = styled.div`
  position: absolute;
  top: 46.600%;
  right: 4px;
  writing-mode: vertical-rl;
  font-family: 'DejaVu Sans Mono', monospace;
  line-height: 16px;
`;

const TimeAxis = styled.div`
  display: grid;
  overflow: hidden;
`;

const Times = styled.div`
  grid-area: 1 / 1;
  display: flex;
  margin-left: -28px;
`;

const Time = styled.div`
  flex: none;
  display: flex;
  flex-direction: column;
  align-items: center;
  width: 4.260%;
  font-family: 'DejaVu Sans Mono', monospace;
  line-height: 26px;
  color: #ff6600;
  &:before {
    content: '';
    width: 1px;
    height: 8px;
    background-color: #808080;
  }
  & span {
    padding-right: 6px;
  }
`;

const Dates = styled.div`
  grid-area: 1 / 1;
  display: flex;
  margin-left: 33px;
`;

const DateLabel = styled.div`
  flex: none;
  width: 11.580%;
  text-align: center;
  font-family: 'DejaVu Sans Mono', monospace;
  font-size: 11px;
  line-height: 16px;
  color: #00ff00;
`;

const Scroll = styled.div`
  display: flex;
  align-items: flex-start;
  padding-top: 1px;
`;

const ScrollButton = styled.button`
  display: flex;
  border: 1px solid #808080;
`;

const Corner = styled.div`
  display: flex;
  align-items: flex-end;
  justify-content: flex-end;
  padding: 4px;
`;
